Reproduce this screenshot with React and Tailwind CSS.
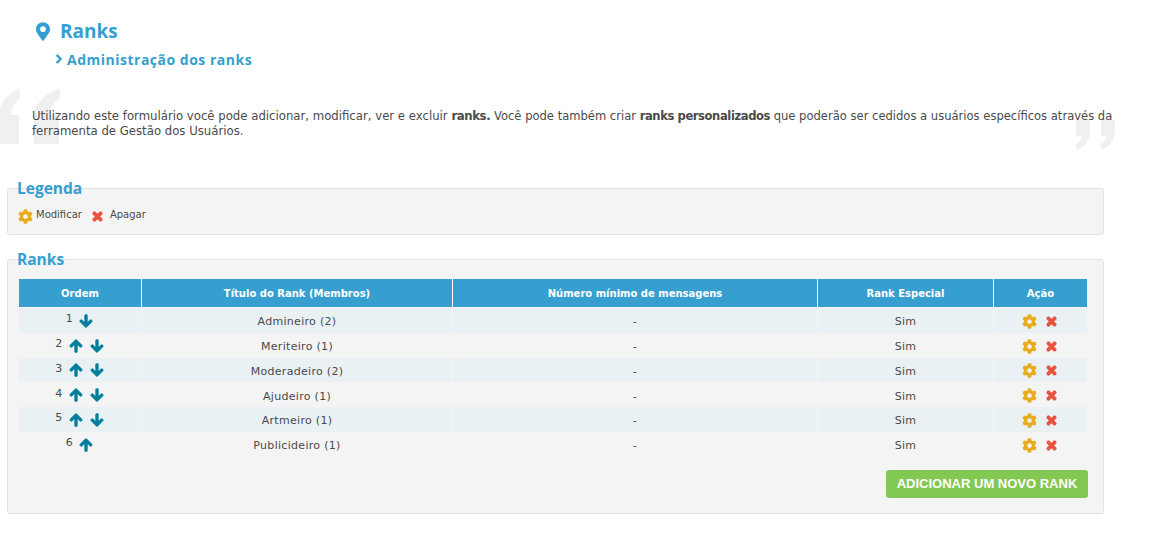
import React from "react";
import { FaCog, FaTimes, FaArrowUp, FaArrowDown, FaMapMarkerAlt, FaChevronRight } from "react-icons/fa";

const rows = [
  { n: 1, up: false, down: true, t: "Admineiro (2)" },
  { n: 2, up: true, down: true, t: "Meriteiro (1)" },
  { n: 3, up: true, down: true, t: "Moderadeiro (2)" },
  { n: 4, up: true, down: true, t: "Ajudeiro (1)" },
  { n: 5, up: true, down: true, t: "Artmeiro (1)" },
  { n: 6, up: true, down: false, t: "Publicideiro (1)" },
];

const cols = "grid grid-cols-[123px_311px_365px_176px_93px]";

function Quote({ className }) {
  return (
    <svg viewBox="0 0 60 56" className={className} fill="#f0f0f0">
      <path d="M20 0C8 5 -2 16 -2 30V56H19V27H11C11 20 15 14 20 11Z" />
      <path d="M60 0C46 5 34 16 34 30V56H59V27H50C50 20 54 14 60 11Z" />
    </svg>
  );
}

function Section({ title, children }) {
  return (
    <section className="mx-[7px] w-[1097px]">
      <h2 className="ml-[10px] h-[17px] text-[15.5px] leading-[17px] font-bold font-['Open_Sans',sans-serif] text-[#369fd0] relative z-10">{title}</h2>
      {children}
    </section>
  );
}

const Bold = ({ children }) => <b className="tracking-[-0.4px]">{children}</b>;

export default function App() {
  return (
    <div className="relative w-[1163px] h-[539px] overflow-hidden bg-white font-['DejaVu_Sans',sans-serif] text-[#4a4a4a]">
      <div className="pl-[36px] pt-[18px] h-[88px] text-[#369fd0]">
        <div className="flex items-center gap-[10px] h-[26px]">
          <FaMapMarkerAlt className="w-[14px] h-[19px]" />
          <h1 className="text-[19px] font-bold leading-[26px] font-['Open_Sans',sans-serif]">Ranks</h1>
        </div>
        <div className="flex items-center gap-[4px] ml-[19px] mt-[3px] h-[24px]">
          <FaChevronRight className="w-[8px] h-[10px]" stroke="currentColor" strokeWidth={50} />
          <span className="text-[14px] font-bold font-['Open_Sans',sans-serif] tracking-[0.5px]">Administração dos ranks</span>
        </div>
      </div>

      <Quote className="absolute left-0 top-[88px] w-[60px] h-[56px]" />
      <svg viewBox="0 0 40 30" className="absolute left-[1075px] top-[120px] w-[40px] h-[30px]" fill="#f0f0f0">
        <path d="M1 0H15V12C15 21 9 27 2 30L0 25C4 23 6 20 6 16H1Z" />
        <path d="M26 0H40V12C40 21 34 27 27 30L25 25C29 23 31 20 31 16H26Z" />
      </svg>

      <p className="relative ml-[32px] w-[1088px] mt-[21px] h-[71px] text-[11.71px] leading-[15px]">
        Utilizando este formulário você pode adicionar, modificar, ver e excluir <Bold>ranks.</Bold> <span className="text-[11.55px]">Você pode também criar <Bold>ranks personalizados</Bold> que poderão ser cedidos a usuários específicos através da</span> ferramenta de Gestão dos Usuários.
      </p>

      <Section title="Legenda">
        <div className="-mt-[9px] h-[47px] bg-[#f4f4f4] border border-[#e2e2e2] rounded-[3px] flex items-center pl-[10px] pt-[5px] text-[10px]">
          <FaCog className="w-[15px] h-[15px] text-[#e9ac1e] mt-[5px]" />
          <span className="ml-[3px]">Modificar</span>
          <FaTimes className="w-[13px] h-[13px] text-[#ea5240] ml-[9px] mt-[5px]" stroke="currentColor" strokeWidth={50} />
          <span className="ml-[6px]">Apagar</span>
        </div>
      </Section>

      <div className="h-[16px]" />

      <Section title="Ranks">
        <div className="-mt-[9px] h-[255px] bg-[#f4f4f4] border border-[#e2e2e2] rounded-[3px] pt-[19px] pl-[11px]">
          <div className="w-[1068px] text-[11px] tracking-[0.3px]">
            <div className={`${cols} h-[28px] bg-[#369fd0] text-white font-bold text-[10px] tracking-normal items-center text-center mb-px`}>
              <div className="h-full flex items-center justify-center border-r border-white">Ordem</div>
              <div className="h-full flex items-center justify-center border-r border-white">Título do Rank (Membros)</div>
              <div className="h-full flex items-center justify-center border-r border-white">Número mínimo de mensagens</div>
              <div className="h-full flex items-center justify-center border-r border-white">Rank Especial</div>
              <div className="h-full flex items-center justify-center">Ação</div>
            </div>
            {rows.map((r, i) => (
              <div key={r.n} className={`${cols} h-[24.8px] items-center text-center ${i % 2 === 0 ? "bg-[#e9f1f5]" : "bg-[#f4f4f4]"}`}>
                <div className="h-full flex items-center justify-center border-r border-[#f4f4f4] pt-[1px] pr-[1px]">
                  <span className="mr-[6px] -mt-[3px]">{r.n}</span>
                  {r.up && <FaArrowUp className="w-[14px] h-[14px] text-[#007d9c]" stroke="currentColor" strokeWidth={40} />}
                  {r.up && r.down && <span className="w-[7px]" />}
                  {r.down && <FaArrowDown className="w-[14px] h-[14px] text-[#007d9c]" stroke="currentColor" strokeWidth={40} />}
                </div>
                <div className="h-full flex items-center justify-center border-r border-[#f4f4f4] pt-[4px]">{r.t}</div>
                <div className="h-full flex items-center justify-center border-r border-[#f4f4f4] pt-[4px]">-</div>
                <div className="h-full flex items-center justify-center border-r border-[#f4f4f4] pt-[4px]">Sim</div>
                <div className="h-full flex items-center justify-center gap-[8px] pt-[2px] pr-[2px]">
                  <FaCog className="w-[15px] h-[15px] text-[#e9ac1e]" />
                  <FaTimes className="w-[13px] h-[13px] text-[#ea5240]" stroke="currentColor" strokeWidth={50} />
                </div>
              </div>
            ))}
            <div className="flex justify-end mt-[13px] -mr-px">
              <button className="w-[202px] h-[28px] bg-[#84c854] rounded-[3px] text-white font-bold text-[13px] tracking-normal font-['Liberation_Sans',sans-serif] text-center">
                ADICIONAR UM NOVO RANK
              </button>
            </div>
          </div>
        </div>
      </Section>
    </div>
  );
}
